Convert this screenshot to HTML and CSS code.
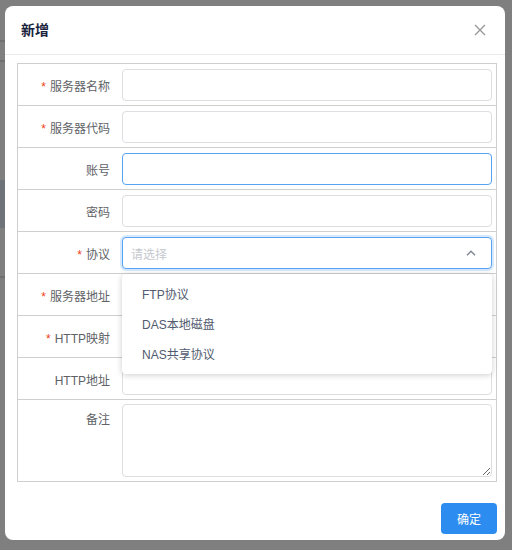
FILE: index.html
```html
<!DOCTYPE html>
<html lang="zh">
<head>
<meta charset="utf-8">
<title>新增</title>
<link rel="stylesheet" href="styles.css">
</head>
<body>
<div class="page">
  <div class="page-line l1"></div>
  <div class="page-band"></div>
  <div class="page-line l2"></div>
  <div class="page-line l3"></div>
</div>
<div class="mask"></div>
<div class="modal">
  <div class="modal-header">
    <span class="modal-title">新增</span>
    <svg class="close" width="12" height="12" viewBox="0 0 12 12"><path d="M1 1L11 11M11 1L1 11" stroke="#999" stroke-width="1.4" fill="none"/></svg>
  </div>
  <div class="modal-body">
    <div class="form">
      <div class="row">
        <div class="label"><span class="req">*</span>服务器名称</div>
        <div class="field"><div class="input"></div></div>
      </div>
      <div class="row">
        <div class="label"><span class="req">*</span>服务器代码</div>
        <div class="field"><div class="input"></div></div>
      </div>
      <div class="row">
        <div class="label">账号</div>
        <div class="field"><div class="input focus"></div></div>
      </div>
      <div class="row">
        <div class="label">密码</div>
        <div class="field"><div class="input"></div></div>
      </div>
      <div class="row">
        <div class="label"><span class="req">*</span>协议</div>
        <div class="field select-field">
          <div class="input select">
            <span class="placeholder">请选择</span>
            <svg class="arrow" width="10" height="6" viewBox="0 0 10 6"><path d="M1 5.2L5 1.2L9 5.2" stroke="#808695" stroke-width="1.4" fill="none"/></svg>
          </div>
          <div class="dropdown">
            <div class="option">FTP协议</div>
            <div class="option">DAS本地磁盘</div>
            <div class="option">NAS共享协议</div>
          </div>
        </div>
      </div>
      <div class="row">
        <div class="label"><span class="req">*</span>服务器地址</div>
        <div class="field"><div class="input"></div></div>
      </div>
      <div class="row">
        <div class="label"><span class="req">*</span>HTTP映射</div>
        <div class="field"><div class="input"></div></div>
      </div>
      <div class="row">
        <div class="label">HTTP地址</div>
        <div class="field"><div class="input"></div></div>
      </div>
      <div class="row row-tall">
        <div class="label label-top">备注</div>
        <div class="field field-tall"><textarea class="textarea"></textarea></div>
      </div>
    </div>
  </div>
  <div class="modal-footer">
    <button class="btn">确定</button>
  </div>
</div>
</body>
</html>
```

FILE: styles.css
```css
* { box-sizing: border-box; }
html, body {
  margin: 0;
  padding: 0;
  width: 512px;
  height: 550px;
  overflow: hidden;
  background: #ffffff;
  font-family: "Liberation Sans", "Noto Sans CJK SC", sans-serif;
}
.page {
  position: absolute;
  left: 0; top: 0;
  width: 512px; height: 550px;
  background: #ffffff;
}
.page-line {
  position: absolute;
  left: 0;
  width: 5px;
  height: 2px;
  background: #e0e0e0;
}
.page-line.l1 { top: 40px; }
.page-line.l2 { top: 60px; }
.page-line.l3 { top: 276px; }
.page-band {
  position: absolute;
  left: 0;
  top: 180px;
  width: 5px;
  height: 48px;
  background: #dce6f2;
}
.mask {
  position: absolute;
  left: 0; top: 0;
  width: 512px; height: 550px;
  background: rgba(0, 0, 0, 0.5);
}
.modal {
  position: absolute;
  left: 5px;
  top: 6px;
  width: 500px;
  height: 534px;
  background: #ffffff;
  border-radius: 8px;
  display: flex;
  flex-direction: column;
}
.modal-header {
  height: 49px;
  border-bottom: 1px solid #e8eaec;
  display: flex;
  align-items: center;
  justify-content: space-between;
  padding: 0 19px 0 16px;
}
.modal-title {
  font-size: 14px;
  font-weight: bold;
  color: #17233d;
  line-height: 20px;
}
.close { display: block; }
.modal-body {
  padding: 8px 8px 0 12px;
}
.form {
  border: 1px solid #cfcfcf;
  border-bottom: none;
}
.row {
  display: flex;
  height: 42px;
  border-bottom: 1px solid #cfcfcf;
}
.row-tall {
  height: 82px;
}
.label {
  width: 104px;
  flex: none;
  padding-right: 12px;
  padding-top: 3px;
  text-align: right;
  font-size: 12px;
  color: #606266;
  line-height: 41px;
}
.label-top {
  line-height: 16px;
  padding-top: 12px;
}
.req {
  color: #ed4014;
  margin-right: 4px;
  font-family: "Liberation Sans", sans-serif;
}
.field {
  flex: 1;
  padding: 5px 4px 4px 0;
}
.field-tall {
  padding: 4px 4px 4px 0;
}
.select-field {
  position: relative;
}
.input {
  height: 32px;
  border: 1px solid #dcdee2;
  border-radius: 4px;
  background: #fff;
}
.input.focus {
  border-color: #57a3f3;
}
.input.select {
  border-color: #57a3f3;
  box-shadow: 0 0 0 2px rgba(45, 140, 240, 0.2);
  display: flex;
  align-items: center;
  justify-content: space-between;
  padding: 0 15px 0 8px;
}
.placeholder {
  font-size: 12px;
  color: #c5c8ce;
}
.arrow { display: block; }
.dropdown {
  position: absolute;
  left: 0;
  top: 42px;
  width: 370px;
  background: #fff;
  border-radius: 4px;
  box-shadow: 0 1px 6px rgba(0, 0, 0, 0.2);
  padding: 6px 0 4px;
  z-index: 5;
}
.option {
  height: 30px;
  line-height: 30px;
  padding-left: 20px;
  font-size: 12px;
  color: #515a6e;
}
.textarea {
  display: block;
  width: 100%;
  height: 73px;
  border: 1px solid #dcdee2;
  border-radius: 4px;
  resize: vertical;
  margin: 0;
  font-family: inherit;
  outline: none;
}
.modal-footer {
  display: flex;
  justify-content: flex-end;
  padding: 21px 8px 0 0;
}
.btn {
  width: 56px;
  height: 31px;
  border: none;
  border-radius: 4px;
  background: #2d8cf0;
  color: #fff;
  font-size: 12px;
  font-family: "Liberation Sans", "Noto Sans CJK SC", sans-serif;
  padding: 0;
}
```
